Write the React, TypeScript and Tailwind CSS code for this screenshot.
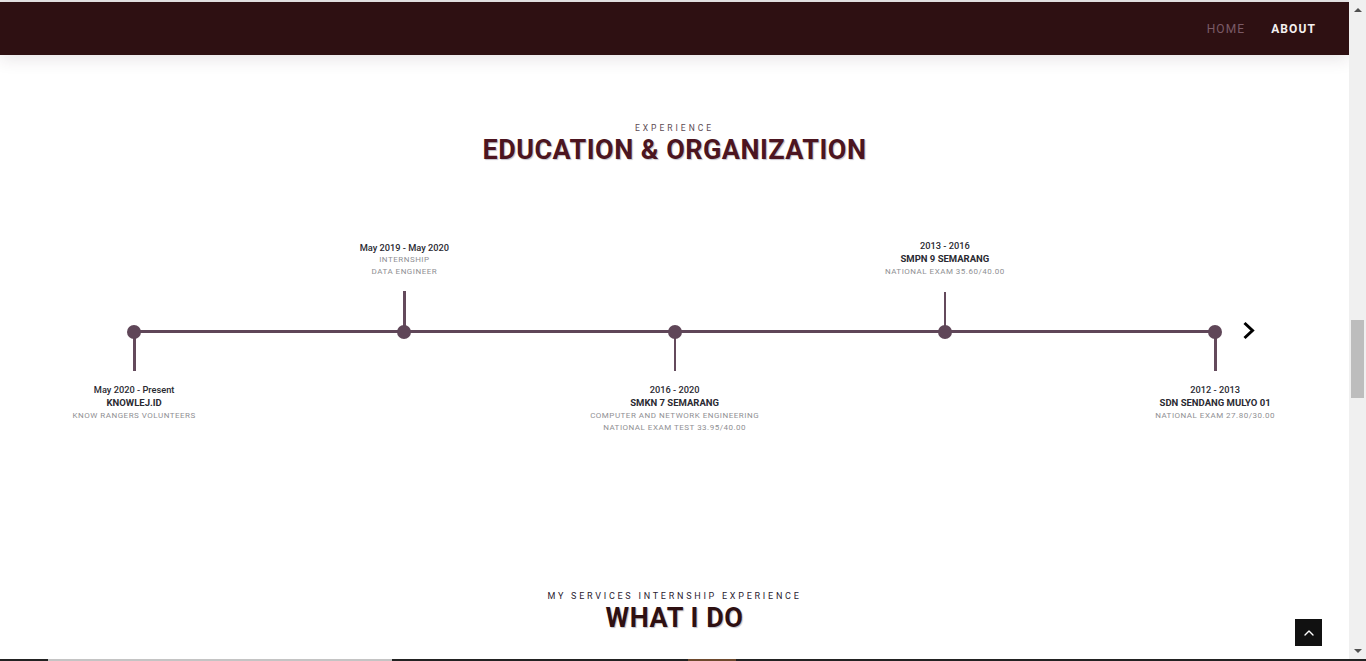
import { ChevronUp } from 'lucide-react';
import { clsx } from 'clsx';

interface TimelineItem {
  date: string;
  title?: string;
  lines: string[];
  side: 'top' | 'bottom';
  tick: string;
}

const items: TimelineItem[] = [
  { date: 'May 2020 - Present', title: 'KNOWLEJ.ID', lines: ['KNOW RANGERS VOLUNTEERS'], side: 'bottom', tick: 'w-[3px]' },
  { date: 'May 2019 - May 2020', lines: ['INTERNSHIP', 'DATA ENGINEER'], side: 'top', tick: 'w-[3px]' },
  { date: '2016 - 2020', title: 'SMKN 7 SEMARANG', lines: ['COMPUTER AND NETWORK ENGINEERING', 'NATIONAL EXAM TEST 33.95/40.00'], side: 'bottom', tick: 'w-[2px]' },
  { date: '2013 - 2016', title: 'SMPN 9 SEMARANG', lines: ['NATIONAL EXAM 35.60/40.00'], side: 'top', tick: 'w-[2px]' },
  { date: '2012 - 2013', title: 'SDN SENDANG MULYO 01', lines: ['NATIONAL EXAM 27.80/30.00'], side: 'bottom', tick: 'w-[3px]' },
];

function ItemText({ item }: { item: TimelineItem }) {
  return (
    <div className="text-center whitespace-nowrap">
      <div className="text-[9.25px] leading-[12px] font-medium text-[#2a2a32]">{item.date}</div>
      {item.title && <div className="text-[9.5px] leading-[14px] font-bold text-[#2a2a32]">{item.title}</div>}
      {item.lines.map((line) => (
        <div key={line} className="text-[8px] leading-[11.5px] tracking-[0.5px] text-[#8f8f93]">{line}</div>
      ))}
    </div>
  );
}

function Timeline() {
  return (
    <div className="flex ml-[-1px]">
      {items.map((item, i) => (
        <div key={item.date} className="w-[270.25px] shrink-0 flex flex-col items-center">
          {/* text and tick above the line */}
          <div className="h-[85px] flex flex-col items-center justify-end">
            {item.side === 'top' && (
              <>
                <ItemText item={item} />
                <div className={clsx('h-[40px] mt-[14px] mb-[-6px] bg-[#644a5c]', item.tick)} />
              </>
            )}
          </div>
          {/* dot + connector */}
          <div className="relative h-[14px] w-full flex items-center justify-center">
            {i < items.length - 1 && <div className="absolute left-1/2 top-[5px] w-full h-[3px] bg-[#5f4658]" />}
            <div className="relative w-[14px] h-[14px] rounded-full bg-[#5f4658]" />
          </div>
          <div className="h-[100px] flex flex-col items-center">
            {item.side === 'bottom' && (
              <>
                <div className={clsx('h-[38px] mt-[-6px] mb-[13px] bg-[#644a5c]', item.tick)} />
                <ItemText item={item} />
              </>
            )}
          </div>
        </div>
      ))}
    </div>
  );
}

export default function App() {
  return (
    <div className="relative w-[1366px] h-[661px] overflow-hidden bg-white font-['Roboto',sans-serif] flex flex-col">
      <div className="flex-1 min-h-0 flex">
        {/* page */}
        <div className="w-[1349px] flex flex-col">
          <div className="h-[2px] bg-[#e8e6e6]" />
          <nav className="h-[53px] shrink-0 bg-[#2e1012] flex items-center justify-end pr-[33px] gap-[26px] shadow-[0_4px_16px_rgba(60,30,50,0.12)] text-[12px] tracking-[1.1px] mb-[-1px]">
            <span className="text-[#7a5a66]">HOME</span>
            <span className="font-bold text-[#f4f0f0]">ABOUT</span>
          </nav>

          <section className="pt-[68px] text-center">
            <p className="text-[8.5px] leading-[12px] tracking-[3px] text-[#5c4a52]">EXPERIENCE</p>
            <h2 className="text-[27px] leading-[32px] font-bold tracking-[0.45px] text-[#4c1520] [text-shadow:1px_1px_1px_#c0c0c8]">
              EDUCATION &amp; ORGANIZATION
            </h2>
          </section>

          <div className="mt-[74px]">
            <Timeline />
          </div>

          <section className="mt-[151px] text-center">
            <p className="text-[9px] leading-[12px] tracking-[2.75px] text-[#2a2230]">MY SERVICES INTERNSHIP EXPERIENCE</p>
            <h2 className="text-[27px] leading-[32px] font-bold tracking-[0.55px] text-[#2e1012] [text-shadow:1px_1px_1px_#c0c0c8]">WHAT I DO</h2>
          </section>
        </div>

        {/* scrollbar */}
        <div className="w-[17px] bg-[#f0f0f0] flex flex-col items-center pt-[8px] pb-[6px]">
          <div className="w-0 h-0 border-x-[4px] border-x-transparent border-b-[4px] border-b-[#505050]" />
          <div className="w-[13px] h-[78px] bg-[#bdbdbd] mt-[308px]" />
          <div className="w-0 h-0 border-x-[4px] border-x-transparent border-t-[4px] border-t-[#505050] mt-auto" />
        </div>
      </div>

      {/* next section peeking in at the bottom */}
      <div className="h-[2px] shrink-0 flex bg-[#222222]">
        <div className="w-[48px]" />
        <div className="w-[344px] bg-[#c4c4c4]" />
        <div className="w-[296px]" />
        <div className="w-[48px] bg-[#6e4a2e]" />
      </div>

      {/* next arrow over the timeline */}
      <svg className="absolute left-[1242px] top-[321px]" width="14" height="19" viewBox="0 0 14 19" fill="none">
        <path d="M2.5 2 L10.5 9.5 L2.5 17" stroke="#000" strokeWidth="3" />
      </svg>

      {/* back to top */}
      <button className="absolute left-[1295px] top-[619px] w-[27px] h-[27px] bg-[#111111] flex items-center justify-center">
        <ChevronUp className="w-[16px] h-[16px] text-white" strokeWidth={2} />
      </button>
    </div>
  );
}
